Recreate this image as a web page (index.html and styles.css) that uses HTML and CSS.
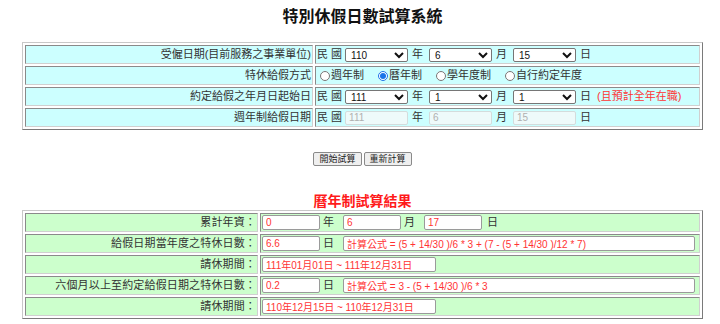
FILE: index.html
```html
<!DOCTYPE html>
<html lang="zh-Hant">
<head>
<meta charset="utf-8">
<title>特別休假日數試算系統</title>
<link rel="stylesheet" href="styles.css">
</head>
<body>
<div class="wrap">
  <h1 class="title">特別休假日數試算系統</h1>

  <table class="grid grid-top">
    <tr>
      <td class="lab lab-top">受僱日期(目前服務之事業單位)</td>
      <td class="val">
        <div class="line">
          <span>民 國</span>
          <select class="sel first"><option>110</option></select><span class="unit">年</span>
          <select class="sel"><option>6</option></select><span class="unit">月</span>
          <select class="sel"><option>15</option></select><span class="unit">日</span>
        </div>
      </td>
    </tr>
    <tr>
      <td class="lab lab-top">特休給假方式</td>
      <td class="val">
        <div class="line">
          <label class="opt first"><input type="radio" name="m" class="radio">週年制</label>
          <label class="opt"><input type="radio" name="m" class="radio" checked>曆年制</label>
          <label class="opt"><input type="radio" name="m" class="radio">學年度制</label>
          <label class="opt"><input type="radio" name="m" class="radio">自行約定年度</label>
        </div>
      </td>
    </tr>
    <tr>
      <td class="lab lab-top">約定給假之年月日起始日</td>
      <td class="val">
        <div class="line">
          <span>民 國</span>
          <select class="sel first"><option>111</option></select><span class="unit">年</span>
          <select class="sel"><option>1</option></select><span class="unit">月</span>
          <select class="sel"><option>1</option></select><span class="unit">日</span>
          <span class="note">(且預計全年在職)</span>
        </div>
      </td>
    </tr>
    <tr>
      <td class="lab lab-top">週年制給假日期</td>
      <td class="val">
        <div class="line">
          <span>民 國</span>
          <input class="dis first" value="111" disabled><span class="unit">年</span>
          <input class="dis" value="6" disabled><span class="unit">月</span>
          <input class="dis" value="15" disabled><span class="unit">日</span>
        </div>
      </td>
    </tr>
  </table>

  <div class="buttons">
    <button class="btn">開始試算</button>
    <button class="btn">重新計算</button>
  </div>

  <h2 class="result-title">曆年制試算結果</h2>

  <table class="grid grid-bottom">
    <tr>
      <td class="lab lab-bottom">累計年資：</td>
      <td class="val">
        <div class="line">
          <input class="out short" value="0" readonly><span class="u2">年</span>
          <input class="out short" value="6" readonly><span class="u2">月</span>
          <input class="out short" value="17" readonly><span class="u2 last">日</span>
        </div>
      </td>
    </tr>
    <tr>
      <td class="lab lab-bottom">給假日期當年度之特休日數：</td>
      <td class="val">
        <div class="line">
          <input class="out short" value="6.6" readonly><span class="u2">日</span>
          <input class="out formula" value="計算公式 = (5 + 14/30 )/6 * 3 + (7 - (5 + 14/30 )/12 * 7)" readonly>
        </div>
      </td>
    </tr>
    <tr>
      <td class="lab lab-bottom">請休期間：</td>
      <td class="val">
        <div class="line">
          <input class="out range" value="111年01月01日 ~ 111年12月31日" readonly>
        </div>
      </td>
    </tr>
    <tr>
      <td class="lab lab-bottom">六個月以上至約定給假日期之特休日數：</td>
      <td class="val">
        <div class="line">
          <input class="out short" value="0.2" readonly><span class="u2">日</span>
          <input class="out formula" value="計算公式 = 3 - (5 + 14/30 )/6 * 3" readonly>
        </div>
      </td>
    </tr>
    <tr>
      <td class="lab lab-bottom">請休期間：</td>
      <td class="val">
        <div class="line">
          <input class="out range" value="110年12月15日 ~ 110年12月31日" readonly>
        </div>
      </td>
    </tr>
  </table>
</div>
</body>
</html>
```

FILE: styles.css
```css
* { box-sizing: border-box; }

html, body {
  margin: 0;
  padding: 0;
  background: #ffffff;
}

body {
  font-family: "Liberation Sans", "Noto Sans CJK TC", sans-serif;
  color: #333333;
  font-size: 11px;
}

.wrap {
  width: 681px;
  margin-left: 22px;
  text-align: center;
}

.title {
  margin: 0;
  padding-top: 8px;
  font-size: 16px;
  line-height: 18px;
  font-weight: 700;
  color: #111111;
}

.grid {
  width: 681px;
  border-collapse: separate;
  border-spacing: 2px;
  border: 1px solid;
  border-color: #c8c8c8 #7a7a7a #7a7a7a #c8c8c8;
  text-align: left;
}

.grid td {
  height: 19px;
  padding: 0 1px;
  border: 1px solid;
  border-color: #8a8a8a #d0d0d0 #d0d0d0 #8a8a8a;
  line-height: 17px;
  white-space: nowrap;
  vertical-align: middle;
}

.grid-top { margin-top: 16px; }
.grid-top td { background: #ccffff; }

.grid-bottom { margin-top: 1px; }
.grid-bottom td { background: #ccffcc; }

.lab { text-align: right; }
.lab-top { width: 288px; }
.lab-bottom { width: 233px; padding-right: 3px; letter-spacing: 0.15px; }

.line {
  display: flex;
  align-items: center;
  height: 17px;
}

.sel {
  width: 63px;
  height: 14px;
  padding: 0 0 0 1px;
  font-family: "Liberation Sans", "Noto Sans CJK TC", sans-serif;
  font-size: 10px;
  color: #111;
  background: #ffffff;
  border: 1px solid #767676;
  border-radius: 2px;
}
.sel.first, .dis.first { margin-left: 3px; }

.unit { margin: 0 6px 0 4px; }

.note {
  color: #ff3333;
  margin-left: 0;
}

.dis {
  width: 63px;
  height: 14px;
  padding: 0 0 0 3px;
  font-family: "Liberation Sans", sans-serif;
  font-size: 10px;
  color: #b0b0b0;
  background: #eefafa;
  border: 1px solid #d4dcdc;
  border-radius: 2px;
}

.opt {
  display: flex;
  align-items: center;
  margin-left: 13px;
}
.opt.first { margin-left: 2px; }

.radio {
  width: 10px;
  height: 10px;
  margin: 0 1px 0 1px;
  accent-color: #1a73e8;
}

.buttons {
  margin-top: 22px;
  display: flex;
  justify-content: center;
  gap: 2px;
}

.btn {
  height: 14px;
  padding: 0 5px;
  font-family: "Noto Sans CJK TC", sans-serif;
  font-size: 9px;
  line-height: 12px;
  color: #222;
  background: #efefef;
  border: 1px solid #8a8a8a;
  border-radius: 2px;
}

.result-title {
  margin: 27px 0 0 0;
  font-size: 14px;
  line-height: 16px;
  font-weight: 700;
  color: #ff1a1a;
}

.out {
  height: 15px;
  padding: 0 0 0 3px;
  font-family: "Liberation Sans", "Noto Sans CJK TC", sans-serif;
  font-size: 10px;
  color: #ff3333;
  background: #ffffff;
  border: 1px solid #9a9a9a;
  border-radius: 2px;
}
.out.short { width: 58px; }
.out.formula { width: 352px; }
.out.range { width: 174px; }

.u2 { margin: 0 9px 0 3px; }
.u2.last { margin-right: 0; margin-left: 5px; }
```
